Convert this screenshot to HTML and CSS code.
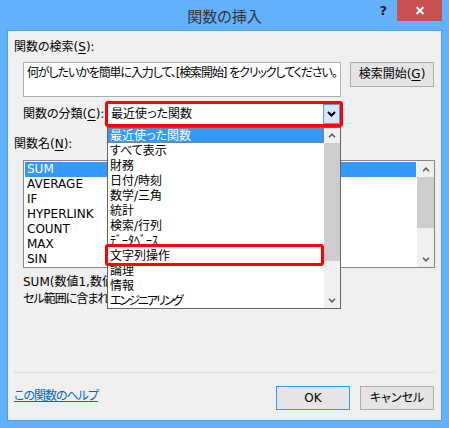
FILE: index.html
```html
<!DOCTYPE html>
<html lang="ja">
<head>
<meta charset="utf-8">
<title>関数の挿入</title>
<link rel="stylesheet" href="styles.css">
</head>
<body>
<div class="window">
  <div class="titlebar">
    <div class="title">関数の挿入</div>
    <div class="controls">
      <span class="help">?</span>
      <span class="close"><svg width="10" height="9" viewBox="0 0 10 9"><path d="M1.5 1 L8.5 8 M8.5 1 L1.5 8" stroke="#fff" stroke-width="2" fill="none"/></svg></span>
    </div>
  </div>
  <div class="content">
    <div class="lbl">関数の検索(<u>S</u>):</div>
    <div class="search-row">
      <div class="search-box">何がしたいかを簡単に入力して、[検索開始] をクリックしてください。</div>
      <div class="btn btn-go">検索開始(<u>G</u>)</div>
    </div>
    <div class="cat-row">
      <span class="lbl cat-lbl">関数の分類(<u>C</u>):</span>
      <div class="combo-frame">
        <div class="combo">
          <span class="combo-text">最近使った関数</span>
          <span class="combo-btn"><svg width="9" height="6" viewBox="0 0 9 6"><path d="M1 1 L4.5 4.5 L8 1" stroke="#000" stroke-width="2" fill="none"/></svg></span>
        </div>
      </div>
    </div>
    <div class="lbl fn-lbl">関数名(<u>N</u>):</div>
    <div class="fn-list">
      <div class="fn-items">
        <div class="item sel">SUM</div>
        <div class="item">AVERAGE</div>
        <div class="item">IF</div>
        <div class="item">HYPERLINK</div>
        <div class="item">COUNT</div>
        <div class="item">MAX</div>
        <div class="item">SIN</div>
      </div>
      <div class="vscroll fn-scroll">
        <div class="arrow"><svg width="8" height="5" viewBox="0 0 8 5"><path d="M1 4.2 L4 1.2 L7 4.2" stroke="#606060" stroke-width="1.6" fill="none"/></svg></div>
        <div class="thumb"></div>
        <div class="track"></div>
        <div class="arrow"><svg width="8" height="5" viewBox="0 0 8 5"><path d="M1 0.8 L4 3.8 L7 0.8" stroke="#606060" stroke-width="1.6" fill="none"/></svg></div>
      </div>
    </div>
    <div class="desc desc-first">SUM(数値1,数値2,...)</div>
    <div class="desc desc-kana">セル範囲に含まれる数値をすべて合計します。</div>
    <div class="sep"></div>
    <div class="footer">
      <a class="help-link" href="#">この関数のヘルプ</a>
      <div class="btn btn-ok">OK</div>
      <div class="btn btn-cancel">キャンセル</div>
    </div>

    <div class="dropdown">
      <div class="dd-items">
        <div class="dd-item sel">最近使った関数</div>
        <div class="dd-item">すべて表示</div>
        <div class="dd-item">財務</div>
        <div class="dd-item">日付/時刻</div>
        <div class="dd-item">数学/三角</div>
        <div class="dd-item">統計</div>
        <div class="dd-item">検索/行列</div>
        <div class="dd-item">ﾃﾞｰﾀﾍﾞｰｽ</div>
        <div class="dd-item">文字列操作</div>
        <div class="dd-item">論理</div>
        <div class="dd-item">情報</div>
        <div class="dd-item dd-kana">エンジニアリング</div>
        <div class="mark"></div>
      </div>
      <div class="vscroll dd-scroll">
        <div class="arrow"><svg width="8" height="5" viewBox="0 0 8 5"><path d="M1 4.2 L4 1.2 L7 4.2" stroke="#606060" stroke-width="1.6" fill="none"/></svg></div>
        <div class="thumb"></div>
        <div class="track"></div>
        <div class="arrow"><svg width="8" height="5" viewBox="0 0 8 5"><path d="M1 0.8 L4 3.8 L7 0.8" stroke="#606060" stroke-width="1.6" fill="none"/></svg></div>
      </div>
    </div>
  </div>
</div>
</body>
</html>
```
FILE: styles.css
```css
* { box-sizing: border-box; }
html, body { margin: 0; padding: 0; }
body {
  width: 449px;
  height: 428px;
  overflow: hidden;
  background: #63b1fb;
  font-family: "DejaVu Sans", "Noto Sans CJK JP", sans-serif;
  font-size: 12px;
  font-feature-settings: "palt";
  color: #000;
}
.window { height: 428px; display: flex; flex-direction: column; }

.titlebar {
  height: 31px;
  display: grid;
  grid-template-columns: 1fr auto 1fr;
  align-items: start;
}
.title {
  grid-column: 2;
  font-family: "Noto Sans CJK JP", sans-serif;
  font-size: 15px;
  line-height: 31px;
  color: #333;
}
.controls {
  grid-column: 3;
  justify-self: end;
  display: flex;
  align-items: flex-start;
  margin-right: 7px;
}
.help {
  font-family: "DejaVu Sans", sans-serif;
  font-weight: bold;
  font-size: 13px;
  line-height: 20px;
  color: #1f1f1f;
  margin-top: 1px;
  margin-right: 10px;
}
.close {
  width: 45px;
  height: 21px;
  background: #c75050;
  display: flex;
  align-items: center;
  justify-content: center;
}

.content {
  position: relative;
  margin-left: 8px;
  width: 433px;
  height: 389px;
  background: #f0f0f0;
  box-shadow: 0 0 0 1px #4f9de6;
  padding: 9px 6px 0;
}
.lbl { line-height: 15px; white-space: nowrap; }
u { text-decoration: underline; text-underline-offset: 2px; }

.search-row { display: flex; align-items: flex-start; margin: 7px 0 0 9px; }
.search-box {
  width: 318px;
  height: 35px;
  background: #fff;
  border: 1px solid #abadb3;
  padding: 3px 3px 2px;
  line-height: 15px;
  white-space: nowrap;
  overflow: hidden;
  letter-spacing: -1.1px;
}
.btn {
  height: 25px;
  border: 1px solid #acacac;
  background: #e5e5e5;
  display: flex;
  align-items: center;
  justify-content: center;
  line-height: 15px;
  white-space: nowrap;
}
.btn-go { width: 84px; margin-left: 9px; }

.cat-row { display: flex; align-items: center; margin: 4px 0 0 9px; }
.cat-lbl { width: 82px; }
.combo-frame {
  width: 238px;
  height: 26px;
  border: 3px solid #ff0000;
  border-radius: 3px;
}
.combo { height: 100%; background: #fff; display: flex; }
.combo-text { flex: 1; padding-left: 3px; line-height: 20px; white-space: nowrap; }
.combo-btn {
  width: 17px;
  border: 1px solid #569de5;
  background: #d4e7fa;
  display: flex;
  align-items: center;
  justify-content: center;
}

.fn-lbl { margin-top: 10px; }
.fn-list {
  margin: 8px 0 0 9px;
  width: 412px;
  height: 108px;
  border: 1px solid #828790;
  background: #fff;
  display: flex;
}
.fn-items { flex: 1; padding: 1px 1px 0 1px; }
.item { height: 15px; line-height: 15px; padding-left: 2px; white-space: nowrap; }
.item.sel { background: #3399ff; color: #fff; }

.vscroll { display: flex; flex-direction: column; background: #f0f0f0; }
.arrow { height: 16px; display: flex; align-items: center; justify-content: center; }
.thumb { background: #cdcdcd; }
.track { flex: 1; }
.fn-scroll { width: 17px; }
.fn-scroll .thumb { height: 51px; }
.dd-scroll { width: 16px; }
.dd-scroll .arrow:first-child { height: 15px; }
.dd-scroll .thumb { height: 118px; }

.desc { margin-left: 9px; line-height: 17px; white-space: nowrap; }
.desc-first { margin-top: 6px; }
.desc-kana { letter-spacing: -1px; }

.sep { margin-top: 64px; height: 1px; background: #dadada; }

.footer { display: flex; align-items: center; gap: 10px; margin-top: 13px; padding-right: 1px; }
.help-link {
  color: #0066cc;
  text-decoration: underline;
  margin-right: auto;
  margin-bottom: 4px;
  line-height: 15px;
  letter-spacing: -1px;
}
.btn-ok, .btn-cancel { width: 74px; height: 24px; }
.btn-ok { border-color: #3399ff; }

.dropdown {
  position: absolute;
  left: 99px;
  top: 96px;
  width: 234px;
  height: 182px;
  border: 1px solid #646464;
  background: #fff;
  display: flex;
}
.dd-items { flex: 1; position: relative; }
.dd-item {
  height: 15px;
  line-height: 13px;
  padding-top: 2px;
  padding-left: 2px;
  white-space: nowrap;
}
.dd-kana { letter-spacing: -2px; }
.dd-item.sel {
  background: #3399ff;
  color: #fff;
  outline: 1px dotted #b5763a;
  outline-offset: -1px;
}
.mark {
  position: absolute;
  left: -3px;
  top: 116px;
  width: 219px;
  height: 22px;
  border: 3px solid #ff0000;
  border-radius: 3px;
}
```
